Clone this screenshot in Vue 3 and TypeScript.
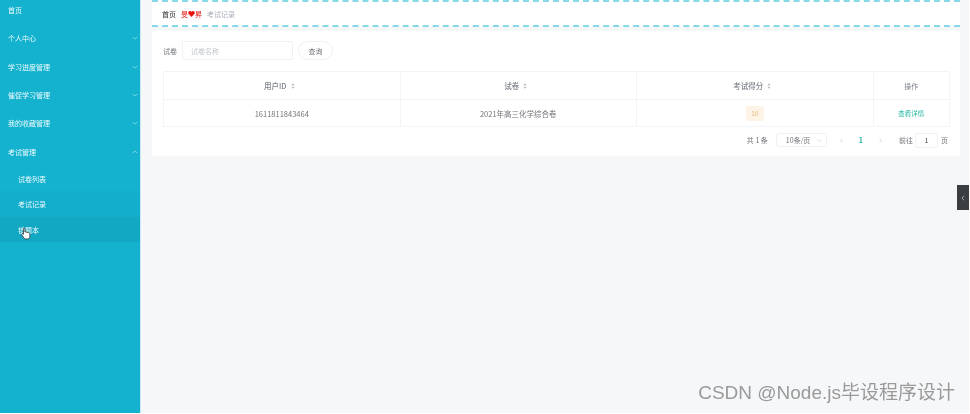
<script setup lang="ts">
interface NavItem { label: string; arrow?: 'down' | 'up' }
const nav: NavItem[] = [
  { label: '首页' },
  { label: '个人中心', arrow: 'down' },
  { label: '学习进度管理', arrow: 'down' },
  { label: '催促学习管理', arrow: 'down' },
  { label: '我的收藏管理', arrow: 'down' },
  { label: '考试管理', arrow: 'up' },
]
const subs = [
  { label: '试卷列表', cls: '' },
  { label: '考试记录', cls: 'sub-b' },
  { label: '错题本', cls: 'sub-c' },
]
const cols = ['用户ID', '试卷', '考试得分']
</script>

<template>
  <div class="page">
    <aside class="side">
      <div v-for="n in nav" :key="n.label" class="nav" :class="{ first: !n.arrow }">
        <span>{{ n.label }}</span>
        <svg v-if="n.arrow" class="chev" viewBox="0 0 8 5" width="6" height="4">
          <path :d="n.arrow === 'down' ? 'M1 1l3 3 3-3' : 'M1 4l3-3 3 3'" fill="none" stroke="#9fe0ee" stroke-width="1" />
        </svg>
      </div>
      <div v-for="s in subs" :key="s.label" class="sub" :class="s.cls">{{ s.label }}</div>
    </aside>

    <main class="main">
      <div class="crumbs">
        <span class="c-home">首页</span>
        <span class="c-sep">旻<svg viewBox="0 0 10 9" width="7" height="6"><path d="M5 9L.8 4.6C-.8 2.6.6 0 2.7 0 3.8 0 4.6.6 5 1.3 5.4.6 6.2 0 7.3 0c2.1 0 3.5 2.6 1.9 4.6z" fill="#e8130f" /></svg>昇</span>
        <span class="c-cur">考试记录</span>
      </div>

      <section class="card">
        <div class="search">
          <span class="lab">试卷</span>
          <div class="inp">试卷名称</div>
          <div class="btn">查询</div>
        </div>

        <div class="table">
          <div class="tr head">
            <div v-for="c in cols" :key="c" class="td w sortable">
              {{ c }}
              <svg class="sort" viewBox="0 0 6 8" width="4" height="6"><path d="M3 0l2.4 3H.6zM3 8L.6 5h4.8z" fill="#b4b8bf" /></svg>
            </div>
            <div class="td op">操作</div>
          </div>
          <div class="tr body">
            <div class="td w">1611811843464</div>
            <div class="td w">2021年高三化学综合卷</div>
            <div class="td w"><span class="tag">10</span></div>
            <div class="td op link">查看详情</div>
          </div>
        </div>

        <div class="pager">
          <span class="total">共 1 条</span>
          <div class="size">10条/页
            <svg viewBox="0 0 8 5" width="5" height="3"><path d="M1 1l3 3 3-3" fill="none" stroke="#c0c4cc" /></svg>
          </div>
          <svg viewBox="0 0 5 8" width="3" height="5"><path d="M4 1L1 4l3 3" fill="none" stroke="#b8bcc4" /></svg>
          <span class="num">1</span>
          <svg viewBox="0 0 5 8" width="3" height="5"><path d="M1 1l3 3-3 3" fill="none" stroke="#b8bcc4" /></svg>
          <span class="goto">前往</span>
          <div class="jump">1</div>
          <span class="pgw">页</span>
        </div>
      </section>
    </main>

    <div class="toggle">
      <svg viewBox="0 0 5 8" width="4" height="6"><path d="M4 1L1 4l3 3" fill="none" stroke="#c8c8c8" /></svg>
    </div>
    <svg class="cursor" viewBox="0 0 12 15" width="10" height="13">
      <path d="M3.4 1c.8 0 1.3.6 1.3 1.3v3.200l4 .8c1.200.3 1.900 1 1.900 2.100v2.600c0 1.900-1.100 3-2.700 3H5.700c-1 0-1.700-.5-2.200-1.200L1 9c-.6-1 .8-2 1.600-1l.4.500V2.300C3 1.600 2.800 1 3.400 1z" fill="#fff" stroke="#3a3a3a" stroke-width="1" />
    </svg>
    <div class="mark">CSDN @Node.js毕设程序设计</div>
  </div>
</template>

<style>
html, body { margin: 0; background: #fff; }
</style>

<style scoped>
.page {
  position: relative;
  display: flex;
  width: 969px;
  height: 413px;
  overflow: hidden;
  background: #f6f7f9;
  font-family: "Noto Sans CJK SC", "Liberation Sans", sans-serif;
  filter: blur(0.45px);
}
.side {
  flex: none;
  width: 140px;
  height: 413px;
  background: #14b2cf;
  border-right: 1px solid #c9eaf2;
  box-sizing: content-box;
}
.nav {
  display: flex;
  align-items: center;
  justify-content: space-between;
  height: 28.4px;
  padding: 0 1px 0 8px;
  font-size: 7px;
  color: #eefafc;
}
.nav.first { height: 24px; padding-bottom: 4px; box-sizing: border-box; }
.sub {
  display: flex;
  align-items: center;
  height: 25.5px;
  padding-left: 18px;
  font-size: 7px;
  color: #f0fbfd;
}
.sub-b { background: #13aecb; }
.sub-c { background: #12a7c3; }
.chev { margin-right: 1px; }
.main {
  flex: 1;
  min-width: 0;
  padding: 0 9px 0 11px;
}
.crumbs {
  display: flex;
  align-items: center;
  gap: 5px;
  height: 27px;
  box-sizing: border-box;
  padding-left: 10px;
  background: #fff;
  border-top: 2px dashed #88d9e7;
  border-bottom: 2px dashed #88d9e7;
  font-size: 7px;
}
.c-home { color: #4a4c50; font-weight: 500; }
.c-sep { display: inline-flex; align-items: center; color: #e8130f; }
.c-cur { color: #a8adb8; }
.card {
  margin-top: 4px;
  padding: 10px 10px 0 11px;
  height: 125px;
  box-sizing: border-box;
  background: #fff;
}
.search {
  display: flex;
  align-items: center;
  height: 19px;
  font-size: 7px;
  color: #707378;
}
.lab { width: 19px; }
.inp {
  display: flex;
  align-items: center;
  width: 111px;
  height: 19px;
  box-sizing: border-box;
  padding-left: 8px;
  border: 1px solid #eff1f4;
  border-radius: 2px;
  color: #c0c4cc;
}
.btn {
  display: flex;
  align-items: center;
  justify-content: center;
  width: 35px;
  height: 19px;
  margin-left: 5px;
  box-sizing: border-box;
  border: 1px solid #eff1f4;
  border-radius: 10px;
}
.table {
  margin-top: 11px;
  border: 1px solid #f3f4f7;
}
.tr { display: flex; }
.head { height: 27px; border-bottom: 1px solid #f3f4f7; color: #7d838c; }
.body { height: 26px; color: #707378; }
.td {
  display: flex;
  align-items: center;
  justify-content: center;
  gap: 3px;
  font-size: 7.5px;
  border-right: 1px solid #f3f4f7;
  box-sizing: border-box;
}
.w { width: 236.5px; }
.sortable { padding-right: 5px; font-weight: 500; }
.op { flex: 1; border-right: 0; font-size: 7px; }
.sort { margin-left: 1px; }
.tag {
  display: flex;
  align-items: center;
  justify-content: center;
  width: 18px;
  height: 15px;
  background: #fdf3e6;
  border-radius: 2px;
  color: #e8b97a;
  font-size: 6.5px;
}
.link { color: #1fb5a0; font-size: 6.5px; }
.pager {
  display: flex;
  align-items: center;
  justify-content: flex-end;
  height: 20px;
  margin-top: 3px;
  font-size: 7px;
  color: #707378;
}
.total { margin-right: 8px; }
.size {
  display: flex;
  align-items: center;
  justify-content: space-between;
  width: 51px;
  height: 14px;
  box-sizing: border-box;
  padding: 0 4px 0 9px;
  border: 1px solid #eff1f4;
  border-radius: 2px;
  margin-right: 13px;
}
.num { margin: 0 16px; color: #1fb5a0; font-weight: 700; }
.goto { margin-left: 17px; margin-right: 2px; }
.jump {
  display: flex;
  align-items: center;
  justify-content: center;
  width: 23px;
  height: 15px;
  box-sizing: border-box;
  border: 1px solid #eff1f4;
  border-radius: 2px;
  color: #4a4c50;
}
.pgw { margin-left: 3px; margin-right: 2px; }
.toggle {
  position: absolute;
  right: 0;
  top: 185px;
  display: flex;
  align-items: center;
  justify-content: center;
  width: 12px;
  height: 25px;
  background: #3a3e40;
}
.cursor { position: absolute; left: 21px; top: 227px; }
.mark {
  position: absolute;
  right: 14px;
  top: 383px;
  font-family: "Liberation Sans", "Noto Sans CJK SC", sans-serif;
  font-size: 19px;
  line-height: 20px;
  color: #9a9a9a;
  white-space: nowrap;
}
</style>
